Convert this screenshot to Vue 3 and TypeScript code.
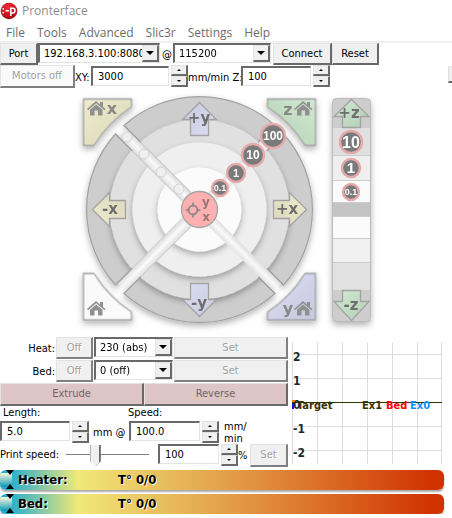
<script setup lang="ts">
import { ref } from 'vue'

const menus = ['File', 'Tools', 'Advanced', 'Slic3r', 'Settings', 'Help']
const port = ref('192.168.3.100:8080')
const baud = ref('115200')
const feedXY = ref('3000')
const feedZ = ref('100')
const extrudeLength = ref('5.0')
const extrudeSpeed = ref('100.0')
const printSpeed = ref(100)

const heaters = ref([
  { id: 'heat', label: 'Heat:', value: '230 (abs)' },
  { id: 'bed', label: 'Bed:', value: '0 (off)' },
])

const gauges = ['Heater:', 'Bed:']

function step(value: string, delta: number, digits = 0): string {
  return (parseFloat(value) + delta).toFixed(digits)
}

// Jog pad geometry, relative to the pad's centre
const sectors = [45, 135, 225, 315]
const rings = [
  { r: 90, fill: '#e0e0e0' },
  { r: 67, fill: '#efefef' },
  { r: 42, fill: '#fbfbfb' },
]
const arrows = [
  { turn: 0, fill: 'url(#blue)' },
  { turn: 90, fill: 'url(#yellow)' },
  { turn: 180, fill: 'url(#blue)' },
  { turn: 270, fill: 'url(#yellow)' },
]
const corners = [
  { sx: 1, sy: 1, fill: 'url(#yellow)' },
  { sx: -1, sy: 1, fill: 'url(#green)' },
  { sx: 1, sy: -1, fill: '#fafafa' },
  { sx: -1, sy: -1, fill: 'url(#blue)' },
]
const houses = [
  { x: 87, y: 101 },
  { x: 294, y: 101 },
  { x: 87, y: 301 },
  { x: 294, y: 301 },
]
const holes = [
  { x: 127, y: 137 },
  { x: 144, y: 154 },
  { x: 161, y: 172 },
  { x: 179, y: 189 },
]
const steps = [
  { x: 273, y: 136, r: 12, size: 12, text: '100' },
  { x: 253, y: 155, r: 11, size: 12, text: '10' },
  { x: 236, y: 173, r: 9, size: 11, text: '1' },
  { x: 220, y: 188, r: 8, size: 9, text: '0.1' },
  { x: 351, y: 142, r: 11, size: 16, text: '10' },
  { x: 351, y: 168, r: 9, size: 15, text: '1' },
  { x: 351, y: 192, r: 8, size: 9, text: '0.1' },
]
const zBands = [
  { y: 127, h: 28, fill: '#e0e0e0' },
  { y: 155, h: 25, fill: '#efefef' },
  { y: 180, h: 22, fill: '#fbfbfb' },
  { y: 202, h: 14, fill: '#c4c4c4' },
  { y: 216, h: 22, fill: '#fbfbfb' },
  { y: 238, h: 24, fill: '#f0f0f0' },
  { y: 262, h: 28, fill: '#e1e1e1' },
]
const gridX = [0, 25, 50, 75, 100, 125, 149]
const gridY = [
  { y: 12, text: '2' },
  { y: 36, text: '1' },
  { y: 84, text: '-1' },
  { y: 108, text: '-2' },
]
</script>

<template>
  <main class="window">
    <header class="title">
      <svg width="18" height="18" viewBox="0 0 18 18" aria-hidden="true">
        <defs>
          <radialGradient id="logo" cx="45%" cy="30%" r="75%">
            <stop offset="0" stop-color="#e8343c" />
            <stop offset="0.6" stop-color="#cf101c" />
            <stop offset="1" stop-color="#8c0710" />
          </radialGradient>
        </defs>
        <circle cx="9" cy="9" r="8.3" fill="url(#logo)" />
        <circle cx="3.2" cy="6.9" r="0.9" fill="#fff" />
        <circle cx="3.2" cy="10.600" r="0.9" fill="#fff" />
        <path d="M5.500 8.800H9M10.800 14V5.600M10.800 6.200H13.200Q15 6.200 15 8.600T13.200 11H10.800" fill="none" stroke="#fff" stroke-width="1.500" />
      </svg>
      <span>Pronterface</span>
    </header>

    <nav class="menu">
      <a v-for="m in menus" :key="m" href="#">{{ m }}</a>
    </nav>

    <section class="bar">
      <button class="btn port">Port</button>
      <span class="combo wide">
        <select v-model="port" aria-label="Port">
          <option>192.168.3.100:8080</option>
        </select>
        <i class="drop"></i>
      </span>
      <span class="at">@</span>
      <span class="combo baud">
        <select v-model="baud" aria-label="Baud rate">
          <option>115200</option>
          <option>250000</option>
        </select>
        <i class="drop"></i>
      </span>
      <button class="btn connect">Connect</button>
      <button class="btn reset">Reset</button>
    </section>

    <section class="bar feed">
      <button class="btn motors" disabled>Motors off</button>
      <label class="xy" for="xy">XY:</label>
      <input id="xy" v-model="feedXY" class="box w78" />
      <span class="spin">
        <button aria-label="Increase XY feed" @click="feedXY = step(feedXY, 1)"></button>
        <button class="down" aria-label="Decrease XY feed" @click="feedXY = step(feedXY, -1)"></button>
      </span>
      <label class="zl" for="z">mm/min Z:</label>
      <input id="z" v-model="feedZ" class="box w70" />
      <span class="spin">
        <button aria-label="Increase Z feed" @click="feedZ = step(feedZ, 1)"></button>
        <button class="down" aria-label="Decrease Z feed" @click="feedZ = step(feedZ, -1)"></button>
      </span>
      <span class="stub"></span>
    </section>

    <svg class="jog" width="400" height="249" viewBox="0 88 400 249" role="img" aria-label="Jog controls">
      <defs>
        <linearGradient id="yellow" x1="0" y1="0" x2="1" y2="1">
          <stop offset="0" stop-color="#f0edcd" /><stop offset="1" stop-color="#d9d6bb" />
        </linearGradient>
        <linearGradient id="blue" x1="0" y1="0" x2="1" y2="1">
          <stop offset="0" stop-color="#c8c9df" /><stop offset="1" stop-color="#dcdef2" />
        </linearGradient>
        <linearGradient id="green" x1="0" y1="0" x2="1" y2="1">
          <stop offset="0" stop-color="#d2ead3" /><stop offset="1" stop-color="#b2cfb3" />
        </linearGradient>
        <linearGradient id="gap" x1="0" y1="0" x2="0" y2="1">
          <stop offset="0" stop-color="#dedede" /><stop offset="0.5" stop-color="#f9f9f9" /><stop offset="1" stop-color="#e2e2e2" />
        </linearGradient>
        <filter id="soft" x="-30%" y="-20%" width="160%" height="150%">
          <feDropShadow dx="0" dy="3" stdDeviation="3" flood-color="#000" flood-opacity="0.3" />
        </filter>
        <g id="house" fill="#909090">
          <path d="M0 8 9 0 13 3.400V1H16V6L18.500 8 17.500 9.300 9.200 2.200 1 9.300Z" />
          <path d="M3 8.700 9.200 3.400 15.500 8.700V14.500H11V9.500H7.500V14.500H3Z" />
        </g>
      </defs>

      <g transform="translate(199.5 209.5)">
        <g filter="url(#soft)">
          <path
            v-for="a in sectors" :key="a" :transform="`rotate(${a})`"
            d="M6 112.800A113 113 0 0 0 112.800 6L89 6A89 89 0 0 1 6 89Z"
            fill="#cdcdcd" stroke="#a2a2a2" stroke-width="1.200"
          />
        </g>
        <circle v-for="r in rings" :key="r.r" :r="r.r" :fill="r.fill" filter="url(#soft)" />
        <g transform="rotate(45)">
          <rect x="-110" y="-5.500" width="220" height="11" fill="url(#gap)" />
          <path d="M-112.800 -6H-18M-112.800 6H-18" stroke="#c4c4c4" />
        </g>
        <g transform="rotate(-45)">
          <rect x="-110" y="-5.500" width="220" height="11" fill="url(#gap)" />
          <path d="M-112.800 -6H-18M-112.800 6H-18" stroke="#ccc" />
        </g>
        <path
          v-for="a in sectors" :key="`edge${a}`" :transform="`rotate(${a})`"
          d="M6 89V112.800M89 6H112.800" fill="none" stroke="#a2a2a2" stroke-width="1.200"
        />
        <g filter="url(#soft)">
          <path
            v-for="c in corners" :key="`${c.sx}${c.sy}`" :transform="`scale(${c.sx} ${c.sy})`"
            d="M-116 -110.500H-68V-102.500A123 123 0 0 0 -105.500 -64H-116Z"
            :fill="c.fill" stroke="#a0a0a0" stroke-width="1.300"
          />
        </g>
        <path
          v-for="a in arrows" :key="a.turn" :transform="`rotate(${a.turn})`"
          d="M0 -107 17 -90H9V-74H-9V-90H-17Z" :fill="a.fill" stroke="#a2a2a2" stroke-width="1.300"
        />
        <circle r="18" fill="#ffb0b0" stroke="#a4a4a4" stroke-width="1.300" />
        <g fill="none" stroke="#8d8585" stroke-width="1.700">
          <circle cx="-6.500" cy="0.500" r="4.500" />
          <path d="M-6.500 -7V-3M-6.500 4V8M-14 0.500H-10M-3 0.500H1" />
        </g>
      </g>

      <circle v-for="h in holes" :key="h.x" :cx="h.x" :cy="h.y" r="5" fill="#efefef" stroke="#d0d0d0" />
      <use v-for="h in houses" :key="`${h.x}-${h.y}`" href="#house" :x="h.x" :y="h.y" />

      <g filter="url(#soft)">
        <rect x="332.500" y="98.500" width="38" height="223" rx="4" fill="#cdcdcd" stroke="#bbb" />
      </g>
      <g v-for="b in zBands" :key="b.y">
        <rect x="333" :y="b.y" width="37" :height="b.h" :fill="b.fill" />
        <path :d="`M333 ${b.y + 0.5}H370`" stroke="#ccc" />
      </g>
      <g fill="url(#green)" stroke="#a2a2a2" stroke-width="1.300">
        <path d="M351.500 99.500 369 116.500H360.500V127.500H342.500V116.500H334Z" />
        <path d="M351.500 320.500 369 301.500H360.500V290.500H342.500V301.500H334Z" />
      </g>

      <g v-for="s in steps" :key="`${s.x}-${s.y}`">
        <circle :cx="s.x" :cy="s.y" :r="s.r" fill="#7a7a7a" stroke="#e4a9a9" stroke-width="2.500" />
        <text class="num" :x="s.x" :y="s.y + s.size * 0.36" :font-size="s.size">{{ s.text }}</text>
      </g>

      <g class="axis">
        <text x="199" y="123">+y</text>
        <text x="199" y="308">-y</text>
        <text x="110" y="214">-x</text>
        <text x="287" y="214">+x</text>
        <text x="349" y="118">+z</text>
        <text x="351" y="310">-z</text>
      </g>
      <g class="axis dim">
        <text x="112" y="114">x</text>
        <text x="288" y="115">z</text>
        <text x="288" y="314">y</text>
      </g>
      <g class="axis small">
        <text x="206" y="206">y</text>
        <text x="206" y="221">x</text>
      </g>
    </svg>

    <section class="lower">
      <div class="controls">
        <div v-for="h in heaters" :key="h.id" class="heat">
          <label :for="h.id">{{ h.label }}</label>
          <button class="btn" disabled>Off</button>
          <span class="combo">
            <select :id="h.id" v-model="h.value">
              <option>{{ h.value }}</option>
            </select>
            <i class="drop"></i>
          </span>
          <button class="btn" disabled>Set</button>
        </div>
        <div class="feedrow">
          <button class="btn pink">Extrude</button>
          <button class="btn pink">Reverse</button>
        </div>
        <div class="amount">
          <label class="len" for="len">Length:</label>
          <label class="spd" for="spd">Speed:</label>
          <input id="len" v-model="extrudeLength" class="box" />
          <span class="spin">
            <button aria-label="Increase length" @click="extrudeLength = step(extrudeLength, 1, 1)"></button>
            <button class="down" aria-label="Decrease length" @click="extrudeLength = step(extrudeLength, -1, 1)"></button>
          </span>
          <span class="unit">mm @</span>
          <input id="spd" v-model="extrudeSpeed" class="box" />
          <span class="spin">
            <button aria-label="Increase speed" @click="extrudeSpeed = step(extrudeSpeed, 1, 1)"></button>
            <button class="down" aria-label="Decrease speed" @click="extrudeSpeed = step(extrudeSpeed, -1, 1)"></button>
          </span>
          <span class="permin">mm/<br />min</span>
        </div>
        <div class="print">
          <label for="ps">Print speed:</label>
          <input id="ps" v-model.number="printSpeed" class="slider" type="range" min="1" max="300" />
          <input v-model.number="printSpeed" class="box" aria-label="Print speed percent" />
          <span class="spin">
            <button aria-label="Increase print speed" @click="printSpeed++"></button>
            <button class="down" aria-label="Decrease print speed" @click="printSpeed--"></button>
          </span>
          <span class="pct">%</span>
          <button class="btn" disabled>Set</button>
        </div>
      </div>

      <svg class="graph" width="150" height="122" viewBox="0 0 150 122" role="img" aria-label="Temperature graph">
        <g stroke="#dedede">
          <path v-for="x in gridX" :key="x" :d="`M${x + 0.5} 0V122`" />
          <path v-for="g in gridY" :key="g.y" :d="`M0 ${g.y + 0.5}H150`" />
        </g>
        <g class="ticks">
          <text v-for="g in gridY" :key="g.text" x="1" :y="g.y + 7">{{ g.text }}</text>
          <text x="1" y="67">0</text>
        </g>
        <path d="M1 59V67" stroke="#1414e6" stroke-width="2" />
        <path d="M0 59H3" stroke="#f08000" stroke-width="2" />
        <text x="5" y="67" fill="#3c3000">Target</text>
        <path d="M0 60.500H150" stroke="#333300" />
        <text x="70" y="67" fill="#333300">Ex1</text>
        <text x="94" y="67" fill="#ff0000">Bed</text>
        <text x="118" y="67" fill="#0a94f5">Ex0</text>
      </svg>
    </section>

    <section class="gauges">
      <div v-for="g in gauges" :key="g" class="gauge">
        <svg width="14" height="20" viewBox="0 0 14 20" aria-hidden="true">
          <defs>
            <linearGradient id="cap" x1="0" y1="0" x2="0" y2="1">
              <stop offset="0" stop-color="#fffbd8" /><stop offset="1" stop-color="#0997b8" />
            </linearGradient>
          </defs>
          <rect y="3" width="12" height="14" fill="url(#cap)" />
          <path d="M6 0H14L10 5ZM6 19H14L10 14Z" fill="#000" />
        </svg>
        <b class="name">{{ g }}</b>
        <b>T° 0/0</b>
      </div>
    </section>
  </main>
</template>

<style>
body {
  margin: 0;
  background: #fff;
}
</style>

<style scoped>
.window {
  overflow: hidden;
  font: 11px/14px "DejaVu Sans Condensed", "DejaVu Sans", sans-serif;
  font-stretch: condensed;
  color: #000;
}
.window * {
  box-sizing: border-box;
}
.title {
  display: flex;
  align-items: center;
  gap: 4px;
  height: 24px;
  padding-bottom: 2px;
  font: 12px/16px "Open Sans", "Noto Sans", sans-serif;
  color: #8c8c8c;
}
.menu {
  display: flex;
  gap: 12px;
  height: 19px;
  padding-left: 6px;
  border-bottom: 2px solid #efefef;
  font: 12px/17px "Open Sans", "Noto Sans", sans-serif;
}
.menu a {
  color: #6d6d6d;
  text-decoration: none;
}
.bar {
  display: flex;
  height: 22px;
}
.feed {
  height: 23px;
}
.btn,
.box,
select {
  font: inherit;
  color: #000;
  border-radius: 0;
  outline: none;
}
.btn {
  padding: 0;
  background: #f0f0f0;
  border: 1px solid #e3e3e3;
  border-right: 2px solid #696969;
  border-bottom: 2px solid #696969;
}
.btn:disabled {
  color: #a0a0a0;
  text-shadow: 1px 1px #fff;
  border-right-color: #808080;
  border-bottom-color: #808080;
}
.port { width: 38px; }
.connect { width: 59px; margin-left: 2px; }
.reset { width: 47px; }
.motors { width: 75px; }
.motors:disabled { background: #fafafa; }
.combo {
  position: relative;
  display: block;
}
.wide { width: 122px; }
.baud { width: 98px; }
select {
  display: block;
  width: 100%;
  height: 20px;
  padding: 0 10px 0 4px;
  appearance: none;
  background: #fff;
  border: 2px solid #696969;
  border-right: 1px solid #e3e3e3;
  border-bottom: 1px solid #e3e3e3;
  text-overflow: clip;
}
.drop {
  position: absolute;
  top: 2px;
  right: 1px;
  display: grid;
  place-items: center;
  width: 17px;
  height: 17px;
  background: #f0f0f0;
  border: 1px solid #e3e3e3;
  border-right: 2px solid #696969;
  border-bottom: 2px solid #696969;
  pointer-events: none;
}
.drop::after {
  content: "";
  border: 4px solid transparent;
  border-top-color: #000;
  border-bottom: 0;
}
.at {
  width: 13px;
  padding: 5px 0 0 2px;
}
.xy { width: 16px; padding-top: 6px; white-space: nowrap; }
.zl { width: 53px; padding-top: 6px; white-space: nowrap; }
.box {
  height: 20px;
  padding: 0 0 0 5px;
  background: #fff;
  border: 2px solid #696969;
  border-right: 1px solid #e3e3e3;
  border-bottom: 1px solid #e3e3e3;
}
.feed .box { margin-top: 1px; }
.w78 { width: 78px; }
.w70 { width: 70px; }
.spin {
  display: grid;
  width: 17px;
  height: 22px;
  margin-left: 2px;
}
.spin button {
  display: grid;
  place-items: center;
  padding: 0;
  background: #f0f0f0;
  border: 1px solid #e3e3e3;
  border-right: 2px solid #696969;
  border-bottom: 2px solid #696969;
}
.spin button::after {
  content: "";
  border: 2px solid transparent;
  border-top: 0;
  border-bottom-color: #000;
}
.spin .down::after {
  border-top: 2px solid #000;
  border-bottom: 0;
}
.stub {
  width: 4px;
  height: 17px;
  margin: 1px 0 0 auto;
  background: #f0f0f0;
  border-left: 1px solid #ddd;
  border-bottom: 2px solid #696969;
}
.jog {
  display: block;
}
.num {
  font-family: "Liberation Sans", Arial, sans-serif;
  font-weight: bold;
  fill: #fff;
  text-anchor: middle;
}
.axis {
  font: bold 15px "DejaVu Sans", sans-serif;
  fill: #6e6e6e;
  text-anchor: middle;
}
.dim {
  font-size: 16px;
  fill: #888884;
}
.small {
  font-size: 12px;
  fill: #977;
}
.lower {
  display: flex;
  gap: 4px;
  height: 133px;
}
.controls {
  width: 288px;
  flex: none;
}
.heat {
  display: grid;
  grid-template-columns: 55px 37px 79px 114px;
  column-gap: 1px;
  height: 23px;
}
.heat label {
  padding-top: 5px;
  text-align: right;
}
.heat .btn {
  height: 22px;
}
.feedrow {
  display: grid;
  grid-template-columns: 1fr 1fr;
  height: 23px;
}
.pink {
  background: #dfc6c6;
  color: #6e6468;
}
.amount {
  display: grid;
  grid-template-columns: 70px 19px 40px 71px 19px 1fr;
  grid-template-rows: 15px 23px;
}
.amount label {
  padding-left: 3px;
}
.len { grid-column: 1 / 4; }
.spd { grid-column: 4 / 7; margin-left: -4px; }
.unit {
  padding: 5px 0 0 4px;
}
.permin {
  padding-left: 5px;
  line-height: 12px;
}
.print {
  display: flex;
  height: 23px;
  white-space: nowrap;
}
.print label {
  width: 60px;
  padding-top: 4px;
}
.slider {
  width: 96px;
  height: 23px;
  margin: 0 2px 0 0;
  padding: 0 5px;
  appearance: none;
  background: linear-gradient(#808080, #808080) 6px 10px / 83px 1px no-repeat;
}
.slider::-webkit-slider-thumb {
  appearance: none;
  width: 11px;
  height: 22px;
  background:
    linear-gradient(135deg, transparent 50%, #696969 50%) 100% 100% / 50% 25% no-repeat,
    linear-gradient(90deg, #b5b5b5 1px, #f0f0f0 1px 9px, #696969 9px);
  clip-path: polygon(0 0, 100% 0, 100% 75%, 50% 100%, 0 75%);
}
.print .box {
  width: 61px;
}
.pct {
  width: 12px;
  padding-top: 5px;
}
.print .btn {
  width: 38px;
}
.graph {
  flex: none;
  margin-top: 5px;
  overflow: hidden;
  font: bold 11px "DejaVu Sans Condensed", "DejaVu Sans", sans-serif;
  font-stretch: condensed;
}
.ticks {
  font-size: 12px;
  fill: #172c2c;
}
.gauges {
  display: grid;
  gap: 4px;
  padding-right: 8px;
}
.gauge {
  display: flex;
  align-items: center;
  height: 20px;
  border-radius: 6px;
  background: linear-gradient(90deg, #12a9d6 0, #4fb9bd 24px, #f0e878 78px, #de8237 64%, #d13300 97%);
  box-shadow: 0 2px 2px #aaa;
  font-size: 13px;
  line-height: 20px;
  text-shadow: 1px 1px #fff;
  overflow: hidden;
}
.name {
  width: 100px;
  margin-left: 4px;
}
</style>
